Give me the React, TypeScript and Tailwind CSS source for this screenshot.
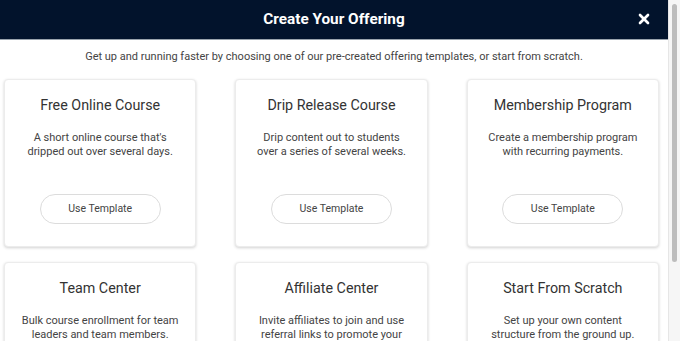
import { X } from "lucide-react";

interface Template {
  title: string;
  description: string;
}

const templates: Template[] = [
  { title: "Free Online Course", description: "A short online course that's\ndripped out over several days." },
  { title: "Drip Release Course", description: "Drip content out to students\nover a series of several weeks." },
  { title: "Membership Program", description: "Create a membership program\nwith recurring payments." },
  { title: "Team Center", description: "Bulk course enrollment for team\nleaders and team members." },
  { title: "Affiliate Center", description: "Invite affiliates to join and use\nreferral links to promote your\nofferings." },
  { title: "Start From Scratch", description: "Set up your own content\nstructure from the ground up." },
];

function TemplateCard({ title, description }: Template) {
  return (
    <div className="flex h-[168px] flex-col items-center rounded-[4px] border border-[#ececec] bg-white px-[10px] pt-[15px] pb-[22px] text-center shadow-[0_1px_3px_rgba(0,0,0,0.18)]">
      <h3 className="text-[14.3px] leading-[20px] text-[#333]">{title}</h3>
      <p className="mt-[16px] flex-1 whitespace-pre-line text-[11px] leading-[14px] text-[#444]">{description}</p>
      <button className="h-[30px] w-[121px] rounded-full border border-[#dcdcdc] bg-white text-[10.5px] text-[#444]">
        Use Template
      </button>
    </div>
  );
}

export default function App() {
  return (
    <div
      className="flex h-[341px] w-[680px] overflow-hidden bg-white"
      style={{ fontFamily: "Roboto, 'Liberation Sans', sans-serif" }}
    >
      <div className="w-[668px] shrink-0">
        <div className="relative flex h-[40px] items-center justify-center border-b border-[#9aa3ad] bg-[#02132c]">
          <h2 className="text-[15.3px] font-bold text-white">Create Your Offering</h2>
          <button className="absolute right-[16px] top-[11px] text-white">
            <X size={16} strokeWidth={4} />
          </button>
        </div>

        {/* Intro line */}
        <p className="pt-[10px] pb-[15px] text-center text-[11px] leading-[14px] text-[#444]">
          Get up and running faster by choosing one of our pre-created offering templates, or start from scratch.
        </p>

        <div className="grid grid-cols-3 gap-x-[39px] gap-y-[15px] pl-[4px] pr-[9px] pb-[20px]">
          {templates.map((t) => (
            <TemplateCard key={t.title} {...t} />
          ))}
        </div>
      </div>

      {/* window scrollbar */}
      <div className="flex-1 border-l border-[#e6e6e6] bg-[#f6f6f6] px-[3px] pt-[4px]">
        <div className="h-[258px] rounded-full bg-[#bdbdbd]" />
      </div>
    </div>
  );
}
